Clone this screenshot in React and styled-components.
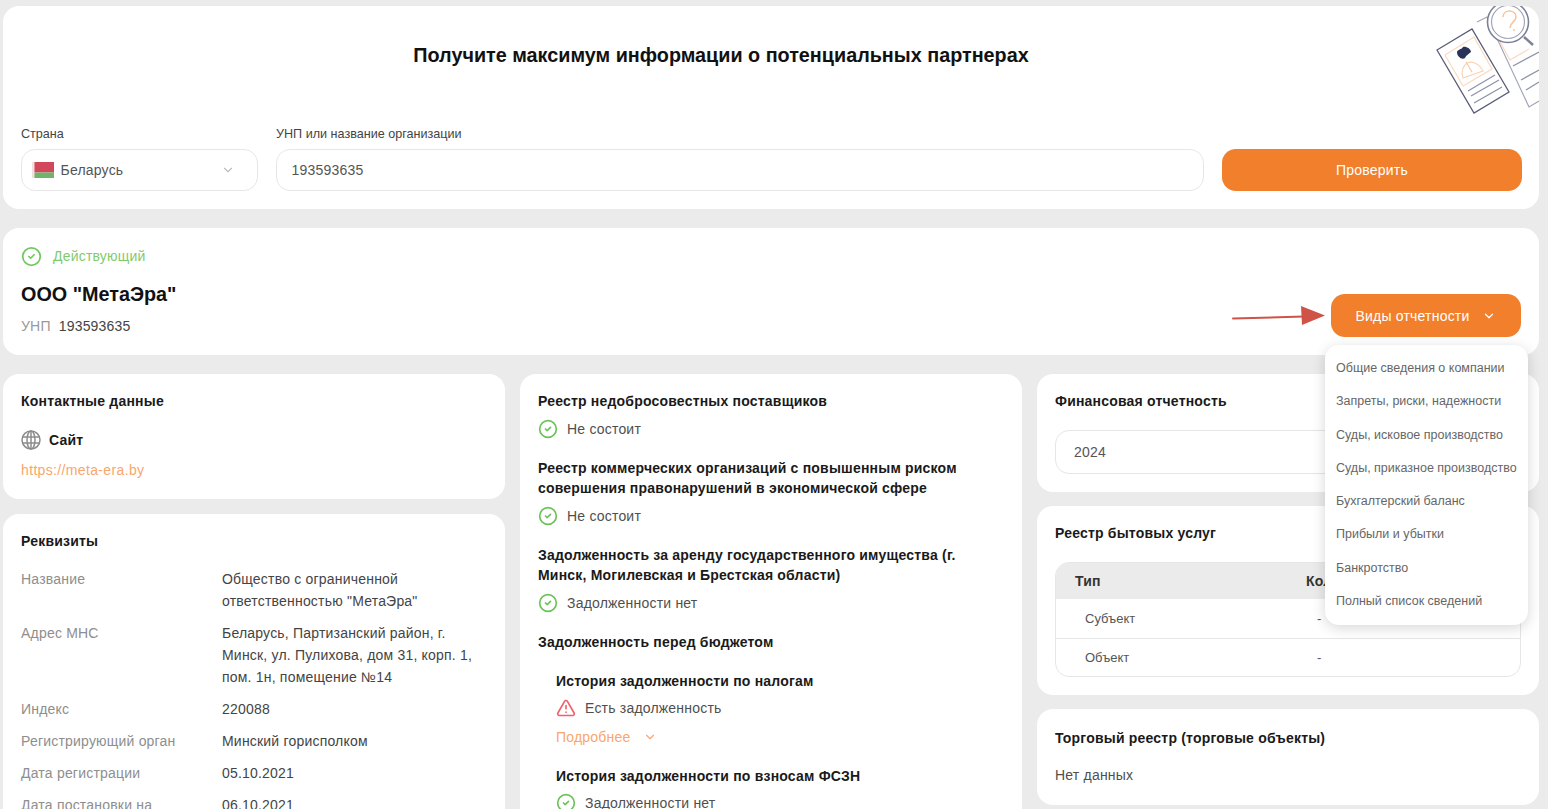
import React from 'react';
import styled, { createGlobalStyle } from 'styled-components';
import { ChevronDown, CircleCheck, TriangleAlert } from 'lucide-react';

const GlobalStyle = createGlobalStyle`
    html, body {
        margin: 0;
        height: 809px;
        overflow: hidden;
        background: #ebebeb;
    }
    body {
        font-family: "Liberation Sans", Arial, sans-serif;
        font-size: 14px;
        letter-spacing: 0.2px;
        color: #4a4a4a;
    }
    * { box-sizing: border-box; }
`;

const MENU_ITEMS = [
    'Общие сведения о компании',
    'Запреты, риски, надежности',
    'Суды, исковое производство',
    'Суды, приказное производство',
    'Бухгалтерский баланс',
    'Прибыли и убытки',
    'Банкротство',
    'Полный список сведений',
];

const REQUISITES = [
    ['Название', 'Общество с ограниченной ответственностью "МетаЭра"'],
    ['Адрес МНС', 'Беларусь, Партизанский район, г. Минск, ул. Пулихова, дом 31, корп. 1, пом. 1н, помещение №14'],
    ['Индекс', '220088'],
    ['Регистрирующий орган', 'Минский горисполком'],
    ['Дата регистрации', '05.10.2021'],
    ['Дата постановки на', '06.10.2021'],
];

const Illustration = () => (
    <IllustrationSvg viewBox="0 6 139 114" fill="none">
        <path d="M77 22 L87 17 L129 107 L139 101" stroke="#a3a6b8" strokeWidth="1.2" />
        <path d="M100 42 L110 60 L129 49" stroke="#fbd9c0" strokeWidth="1.2" />
        <path d="M113 66 L139 52 M121 80 L139 70 M126 90 L139 82" stroke="#8f93a8" strokeWidth="1.3" />
        <circle cx="108" cy="22" r="20.5" fill="#fff" stroke="#7d8198" strokeWidth="1.6" />
        <circle cx="108" cy="22" r="16.5" stroke="#a3a6b8" strokeWidth="1.2" />
        <path d="M124 37 L133 45" stroke="#7d8198" strokeWidth="2.4" />
        <path d="M103 17 C103 9 116 9 116 17 C116 22 110 22 110 28" stroke="#f9c49c" strokeWidth="1.6" />
        <circle cx="114" cy="30" r="1" fill="#f9c49c" />
        <path d="M37 50 L72 29 L109 92 L74 113 Z" fill="#fff" stroke="#5a5e78" strokeWidth="1.3" />
        <path d="M45 55 L74 37 L92 69 L63 86 Z" stroke="#fbd9c0" strokeWidth="1.2" />
        <path d="M57 52 C58 49 61 50 63 47 C66 46 71 49 71 52 C69 54 66 55 65 58 C62 60 57 57 57 52 Z" fill="#2c3358" />
        <path d="M63 78 C60 70 65 62 71 62 C77 63 81 67 83 71 Z" stroke="#fbd0af" strokeWidth="1.1" />
        <path d="M66 62 L72 72" stroke="#f9c49c" strokeWidth="1.1" />
        <path d="M68 91 L95 75 M71 96 L99 80 M74 103 L102 87" stroke="#8f93a8" strokeWidth="1.3" />
    </IllustrationSvg>
);

const Flag = () => (
    <svg width="22" height="16" viewBox="0 0 22 16">
        <rect width="22" height="10.5" fill="#d2485a" />
        <rect y="10.5" width="22" height="5.5" fill="#6fb46a" />
        <rect width="2.5" height="16" fill="#f3dfe0" />
    </svg>
);

const GlobeIcon = () => (
    <svg width="20" height="20" viewBox="0 0 20 20" fill="none" stroke="#8c8c8c" strokeWidth="1.5">
        <circle cx="10" cy="10" r="9" />
        <ellipse cx="10" cy="10" rx="4" ry="9" />
        <path d="M10 1 V19 M1.6 7 H18.4 M1.6 13 H18.4" />
    </svg>
);

const Arrow = () => (
    <ArrowSvg viewBox="0 0 94 22" fill="none">
        <path d="M1 13.5 L72 11.5" stroke="#cf5346" strokeWidth="2" strokeLinecap="round" />
        <path d="M69 1 L93 10.5 L70 20 Z" fill="#cf5346" />
    </ArrowSvg>
);

const StatusLine = ({ warn, children }) => (
    <Status>
        {warn
            ? <TriangleAlert size={20} color="#f0616d" strokeWidth={2} />
            : <CircleCheck size={20} color="#6cc35a" strokeWidth={2} />}
        <span>{children}</span>
    </Status>
);

const App = () => {
    return (
        <Page>
            <GlobalStyle />
            <SearchCard>
                <Illustration />
                <Heading>Получите максимум информации о потенциальных партнерах</Heading>
                <SearchForm>
                    <Field>
                        <FieldLabel>Страна</FieldLabel>
                        <Select>
                            <Flag />
                            <span>Беларусь</span>
                            <SelectChevron><ChevronDown size={14} /></SelectChevron>
                        </Select>
                    </Field>
                    <Field>
                        <FieldLabel>УНП или название организации</FieldLabel>
                        <TextInput>193593635</TextInput>
                    </Field>
                    <SubmitButton>Проверить</SubmitButton>
                </SearchForm>
            </SearchCard>

            <CompanyCard>
                <div>
                    <ActiveStatus>
                        <CircleCheck size={21} color="#72c860" strokeWidth={2} />
                        <span>Действующий</span>
                    </ActiveStatus>
                    <CompanyName>ООО "МетаЭра"</CompanyName>
                    <Unp><span>УНП</span>193593635</Unp>
                </div>
                <ReportArea>
                    <Arrow />
                    <ReportButton>
                        Виды отчетности
                        <ChevronDown size={14} strokeWidth={2.2} />
                    </ReportButton>
                    <Menu>
                        {MENU_ITEMS.map((item) => <MenuItem key={item}>{item}</MenuItem>)}
                    </Menu>
                </ReportArea>
            </CompanyCard>

            <Columns>
                <Column>
                    <ContactCard>
                        <CardTitle>Контактные данные</CardTitle>
                        <SiteRow><GlobeIcon />Сайт</SiteRow>
                        <SiteLink>https://meta-era.by</SiteLink>
                    </ContactCard>
                    <Card>
                        <CardTitle>Реквизиты</CardTitle>
                        <Requisites>
                            {REQUISITES.map(([label, value]) => (
                                <React.Fragment key={label}>
                                    <ReqLabel>{label}</ReqLabel>
                                    <ReqValue>{value}</ReqValue>
                                </React.Fragment>
                            ))}
                        </Requisites>
                    </Card>
                </Column>

                <Column>
                    <Card>
                        <RegistryTitle>Реестр недобросовестных поставщиков</RegistryTitle>
                        <StatusLine>Не состоит</StatusLine>
                        <RegistryTitle $spaced>Реестр коммерческих организаций с повышенным риском совершения правонарушений в экономической сфере</RegistryTitle>
                        <StatusLine>Не состоит</StatusLine>
                        <RegistryTitle $spaced>Задолженность за аренду государственного имущества (г. Минск, Могилевская и Брестская области)</RegistryTitle>
                        <StatusLine>Задолженности нет</StatusLine>
                        <RegistryTitle $spaced>Задолженность перед бюджетом</RegistryTitle>
                        <Nested>
                            <RegistryTitle>История задолженности по налогам</RegistryTitle>
                            <StatusLine warn>Есть задолженность</StatusLine>
                            <MoreLink>Подробнее <ChevronDown size={14} /></MoreLink>
                            <RegistryTitle $spaced>История задолженности по взносам ФСЗН</RegistryTitle>
                            <StatusLine>Задолженности нет</StatusLine>
                        </Nested>
                    </Card>
                </Column>

                <Column>
                    <FinanceCard>
                        <CardTitle>Финансовая отчетность</CardTitle>
                        <YearSelect>2024</YearSelect>
                    </FinanceCard>
                    <ServicesCard>
                        <CardTitle>Реестр бытовых услуг</CardTitle>
                        <Table>
                            <TableHead><span>Тип</span><span>Количество</span></TableHead>
                            <TableRow><span>Субъект</span><span>-</span></TableRow>
                            <TableRow><span>Объект</span><span>-</span></TableRow>
                        </Table>
                    </ServicesCard>
                    <TradeCard>
                        <CardTitle>Торговый реестр (торговые объекты)</CardTitle>
                        <NoData>Нет данных</NoData>
                    </TradeCard>
                </Column>
            </Columns>
        </Page>
    );
};

export default App;

const Page = styled.div`
    width: 1548px;
    height: 809px;
    overflow: hidden;
    padding: 6px 9px 0 3px;
    display: flex;
    flex-direction: column;
`;

const Card = styled.section`
    flex: none;
    background: #fff;
    border-radius: 16px;
    padding: 17px 18px 18px;
`;

const SearchCard = styled(Card)`
    position: relative;
    overflow: hidden;
    height: 203px;
    padding-top: 37px;
    margin-bottom: 19px;
`;

const IllustrationSvg = styled.svg`
    position: absolute;
    top: 0;
    right: 0;
    width: 139px;
    height: 114px;
`;

const Heading = styled.h1`
    margin: 0 0 60px;
    padding-right: 100px;
    text-align: center;
    font-size: 19.8px;
    line-height: 24px;
    font-weight: 700;
    letter-spacing: 0;
    color: #111;
`;

const SearchForm = styled.div`
    display: grid;
    grid-template-columns: 237px 928px 300px;
    column-gap: 18px;
    align-items: end;
`;

const Field = styled.div`
    display: flex;
    flex-direction: column;
    gap: 7px;
`;

const FieldLabel = styled.label`
    font-size: 12.6px;
    line-height: 15px;
    letter-spacing: 0;
    color: #444;
`;

const Select = styled.div`
    display: flex;
    align-items: center;
    gap: 7px;
    height: 42px;
    padding: 0 22px 0 9.5px;
    border: 1.5px solid #e6e6e6;
    border-radius: 14px;
    font-size: 14px;
    color: #555;
`;

const SelectChevron = styled.span`
    display: flex;
    margin-left: auto;
    color: #bdbdbd;
`;

const TextInput = styled.div`
    display: flex;
    align-items: center;
    height: 42px;
    padding: 0 14.5px;
    border: 1.5px solid #e6e6e6;
    border-radius: 14px;
    font-size: 14px;
    color: #555;
`;

const SubmitButton = styled.button`
    height: 42px;
    border: 0;
    border-radius: 14px;
    background: #f17f2b;
    color: #fff;
    letter-spacing: 0.2px;
    font-family: "Liberation Sans", Arial, sans-serif;
    font-size: 14px;
`;

const CompanyCard = styled(Card)`
    display: flex;
    justify-content: space-between;
    height: 127px;
    margin-bottom: 19px;
`;

const ActiveStatus = styled.div`
    display: flex;
    align-items: center;
    gap: 11px;
    height: 22px;
    font-size: 14px;
    color: #7fcb6d;
`;

const CompanyName = styled.div`
    margin-top: 15px;
    font-size: 19.8px;
    line-height: 24px;
    font-weight: 700;
    letter-spacing: 0;
    color: #111;
`;

const Unp = styled.div`
    margin-top: 12px;
    font-size: 14px;
    line-height: 16px;
    color: #444;

    span {
        margin-right: 8px;
        color: #9a9a9a;
    }
`;

const ReportArea = styled.div`
    position: relative;
    display: flex;
    align-items: flex-start;
    gap: 5px;
    padding-top: 49px;
`;

const ArrowSvg = styled.svg`
    width: 94px;
    height: 22px;
    margin-top: 11px;
`;

const ReportButton = styled.button`
    display: flex;
    align-items: center;
    justify-content: center;
    gap: 13px;
    width: 190px;
    height: 43px;
    border: 0;
    border-radius: 14px;
    background: #f17f2b;
    color: #fff;
    letter-spacing: 0.2px;
    font-family: "Liberation Sans", Arial, sans-serif;
    font-size: 14px;
`;

const Menu = styled.ul`
    position: absolute;
    z-index: 5;
    top: 100px;
    right: -7px;
    width: 203px;
    height: 280px;
    margin: 0;
    padding: 7px 0 0 11px;
    list-style: none;
    background: #fff;
    border-radius: 14px;
    box-shadow: 0 3px 14px rgba(0, 0, 0, 0.16);
`;

const MenuItem = styled.li`
    height: 33.3px;
    line-height: 33.3px;
    font-size: 12.5px;
    letter-spacing: 0;
    color: #666;
    white-space: nowrap;
`;

const Columns = styled.div`
    display: grid;
    grid-template-columns: repeat(3, 502px);
    column-gap: 15px;
    align-items: start;
`;

const Column = styled.div`
    display: flex;
    flex-direction: column;
    gap: 15px;
`;

const CardTitle = styled.h3`
    margin: 0;
    font-size: 14px;
    line-height: 20px;
    font-weight: 700;
    color: #1a1a1a;
`;

const ContactCard = styled(Card)`
    height: 125px;
`;

const SiteRow = styled.div`
    display: flex;
    align-items: center;
    gap: 8px;
    margin-top: 19px;
    font-weight: 700;
    color: #1a1a1a;
`;

const SiteLink = styled.div`
    margin-top: 12px;
    letter-spacing: 0.35px;
    color: #f9a66c;
`;

const Requisites = styled.div`
    display: grid;
    grid-template-columns: 201px 1fr;
    row-gap: 10px;
    margin-top: 17px;
    padding-right: 14px;
    line-height: 22px;
`;

const ReqLabel = styled.div`
    color: #8e8e8e;
`;

const ReqValue = styled.div`
    color: #444;
`;

const RegistryTitle = styled.h3`
    margin: ${(p) => (p.$spaced ? '17px' : '0')} 0 0;
    font-size: 14px;
    line-height: 20px;
    font-weight: 700;
    color: #1a1a1a;
`;

const Status = styled.div`
    display: flex;
    align-items: center;
    gap: 9px;
    height: 24px;
    margin-top: 6px;
    color: #4f4f4f;
`;

const Nested = styled.div`
    margin-top: 19px;
    padding-left: 18px;

    ${Status} {
        margin-top: 5px;
    }
`;

const MoreLink = styled.div`
    display: flex;
    align-items: center;
    gap: 13px;
    margin-top: 8px;
    padding-bottom: 3px;
    line-height: 18px;
    color: #f9a66c;
`;

const FinanceCard = styled(Card)`
    height: 118px;
    margin-bottom: -1px;
`;

const YearSelect = styled.div`
    display: flex;
    align-items: center;
    height: 44px;
    margin-top: 19px;
    padding: 0 18px;
    border: 1.5px solid #e6e6e6;
    border-radius: 14px;
    color: #555;
`;

const ServicesCard = styled(Card)`
    height: 189px;
`;

const Table = styled.div`
    margin-top: 19px;
    border: 1.5px solid #e6e6e6;
    border-radius: 14px;
    overflow: hidden;
`;

const TableHead = styled.div`
    display: grid;
    grid-template-columns: 231px 1fr;
    align-items: center;
    height: 36px;
    padding-left: 19px;
    background: #ebebeb;
    font-weight: 700;
    color: #333;
`;

const TableRow = styled.div`
    display: grid;
    grid-template-columns: 232px 1fr;
    align-items: center;
    height: 38.5px;
    padding-left: 29px;
    font-size: 13px;
    letter-spacing: 0;
    color: #555;

    & + & {
        border-top: 1.5px solid #e6e6e6;
    }
`;

const TradeCard = styled(Card)`
    height: 96px;
    margin-top: -1px;
    padding-top: 19px;
`;

const NoData = styled.div`
    margin-top: 19px;
    color: #4f4f4f;
`;
